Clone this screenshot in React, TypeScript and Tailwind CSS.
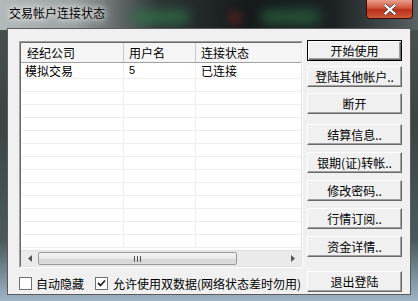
import React from 'react'

const font = "font-['SimSun','Noto_Sans_CJK_SC',sans-serif]"

function Btn({ label, top, primary }: { label: string; top: number; primary?: boolean }) {
  return (
    <div
      className={`w-[95px] h-[21px] flex items-center justify-center text-[12px] leading-none text-black bg-[#f0f0f0] ${
        primary
          ? 'border border-[#000] shadow-[inset_1px_1px_0_#fff,inset_-1px_-1px_0_#696969,inset_-2px_-2px_0_#a0a0a0]'
          : 'border-t border-l border-t-white border-l-white border-r border-b border-r-[#696969] border-b-[#696969] shadow-[inset_-1px_-1px_0_#a0a0a0]'
      }`}
      style={{ marginTop: top }}
    >
      {label}
    </div>
  )
}

function Check({ checked }: { checked?: boolean }) {
  return (
    <div className="w-[13px] h-[13px] border border-[#707070] bg-white flex items-center justify-center">
      {checked && (
        <svg width="9" height="9" viewBox="0 0 9 9">
          <path d="M1 4l2.5 2.5L8 1.5" stroke="#222" strokeWidth="1.8" fill="none" />
        </svg>
      )}
    </div>
  )
}

export default function App() {
  const rows = Array.from({ length: 13 })
  return (
    <div className={`w-[418px] h-[301px] relative overflow-hidden flex flex-col bg-[linear-gradient(180deg,#4b5352_0%,#3a4442_40%,#4a5a5c_80%,#9fb4c6_100%)] ${font}`}>
      {/* title bar glass */}
      <div className="absolute left-0 top-0 w-[418px] h-[30px] bg-[linear-gradient(90deg,#b3b8ba_0%,#9aa0a2_18%,#2e3436_38%,#15191b_60%,#1c2224_80%,#5a6264_100%)]"></div>
      <div className="absolute left-[130px] top-[10px] w-[60px] h-[14px] rounded-full bg-[#2f7a4a] blur-[6px] opacity-70"></div>
      <div className="absolute left-[260px] top-[10px] w-[60px] h-[14px] rounded-full bg-[#2f7a4a] blur-[6px] opacity-60"></div>
      <div className="absolute left-[228px] top-[12px] w-[14px] h-[12px] rounded-full bg-[#6a2222] blur-[4px] opacity-70"></div>

      {/* title bar */}
      <div className="h-[28px] flex items-start relative">
        <div className="ml-[9px] mt-[6px] text-[12px] leading-[14px] text-black [text-shadow:0_0_6px_#fff,0_0_10px_#fff]">
          交易帐户连接状态
        </div>
        <div className="ml-auto mr-[5px] w-[47px] h-[19px] rounded-b-[4px] border border-[#3a0d08] border-t-0 bg-[linear-gradient(180deg,#e9a08e_0%,#d0533a_45%,#b8301a_55%,#cf5a3a_100%)] flex items-center justify-center">
          <svg width="12" height="11" viewBox="0 0 12 11">
            <path d="M1.5 1.5L10.5 9.5M10.5 1.5L1.5 9.5" stroke="#3a3a3a" strokeWidth="3.4" strokeLinecap="square" />
            <path d="M1.5 1.5L10.5 9.5M10.5 1.5L1.5 9.5" stroke="#fff" strokeWidth="2.2" strokeLinecap="square" />
          </svg>
        </div>
      </div>

      {/* client area */}
      <div className="flex-1 flex px-[7px] pb-[6px] relative">
        <div className="flex-1 flex border border-[#5b5b5b] bg-[#f0f0f0]">
          {/* left column */}
          <div className="w-[295px] pl-[11px] pt-[12px] flex flex-col">
            <div className="w-[284px] h-[227px] border border-[#a0a0a0] border-r-white border-b-white flex flex-col">
              <div className="flex-1 border border-[#696969] border-r-[#e3e3e3] border-b-[#e3e3e3] bg-white flex flex-col overflow-hidden">
                <div className="h-[20px] flex text-[12px] text-black bg-[#f5f5f5] border-b border-[#a0a0a0] shrink-0">
                  <div className="w-[103px] pl-[6px] flex items-center border-r border-[#c8c8c8]">经纪公司</div>
                  <div className="w-[72px] pl-[5px] flex items-center border-r border-[#c8c8c8]">用户名</div>
                  <div className="flex-1 pl-[5px] flex items-center">连接状态</div>
                </div>
                <div className="flex-1 overflow-hidden">
                  <div className="h-[16px] flex text-[12px] leading-[15px] text-black border-b border-[#eeeeee]">
                    <div className="w-[103px] pl-[4px] border-r border-[#eeeeee]">模拟交易</div>
                    <div className="w-[72px] pl-[5px] border-r border-[#eeeeee] font-['Liberation_Sans',sans-serif] text-[11px]">5</div>
                    <div className="flex-1 pl-[5px]">已连接</div>
                  </div>
                  {rows.map((_, i) => (
                    <div key={i} className="h-[13px] flex border-b border-[#eeeeee]">
                      <div className="w-[103px] border-r border-[#eeeeee]"></div>
                      <div className="w-[72px] border-r border-[#eeeeee]"></div>
                      <div className="flex-1"></div>
                    </div>
                  ))}
                </div>
                {/* horizontal scrollbar */}
                <div className="h-[16px] shrink-0 flex bg-[#eaeaea] border-t border-[#e0e0e0]">
                  <div className="w-[17px] flex items-center justify-center">
                    <svg width="4" height="7" viewBox="0 0 4 7"><path d="M4 0L0 3.5L4 7Z" fill="#555" /></svg>
                  </div>
                  <div className="w-[199px] my-[1px] rounded-[2px] border border-[#9a9a9a] bg-[linear-gradient(180deg,#f4f4f4_0%,#e8e8e8_50%,#d6d6d6_51%,#dcdcdc_100%)] flex items-center justify-center gap-[2px]">
                    <div className="w-[1px] h-[6px] bg-[#555]"></div>
                    <div className="w-[1px] h-[6px] bg-[#555]"></div>
                    <div className="w-[1px] h-[6px] bg-[#555]"></div>
                  </div>
                  <div className="flex-1"></div>
                  <div className="w-[17px] flex items-center justify-center">
                    <svg width="4" height="7" viewBox="0 0 4 7"><path d="M0 0L4 3.5L0 7Z" fill="#555" /></svg>
                  </div>
                </div>
              </div>
            </div>
            <div className="mt-[9px] flex items-center text-[12px] text-black leading-none">
              <Check />
              <span className="ml-[4px]">自动隐藏</span>
              <div className="ml-[11px]"><Check checked /></div>
              <span className="ml-[5px] whitespace-nowrap">允许使用双数据(网络状态差时勿用)</span>
            </div>
          </div>
          {/* buttons */}
          <div className="flex flex-col pl-[4px]">
            <Btn label="开始使用" top={11} primary />
            <Btn label="登陆其他帐户.." top={5} />
            <Btn label="断开" top={6} />
            <Btn label="结算信息.." top={10} />
            <Btn label="银期(证)转帐.." top={7} />
            <Btn label="修改密码.." top={7} />
            <Btn label="行情订阅.." top={7} />
            <Btn label="资金详情.." top={7} />
            <Btn label="退出登陆" top={14} />
          </div>
        </div>
      </div>
    </div>
  )
}
